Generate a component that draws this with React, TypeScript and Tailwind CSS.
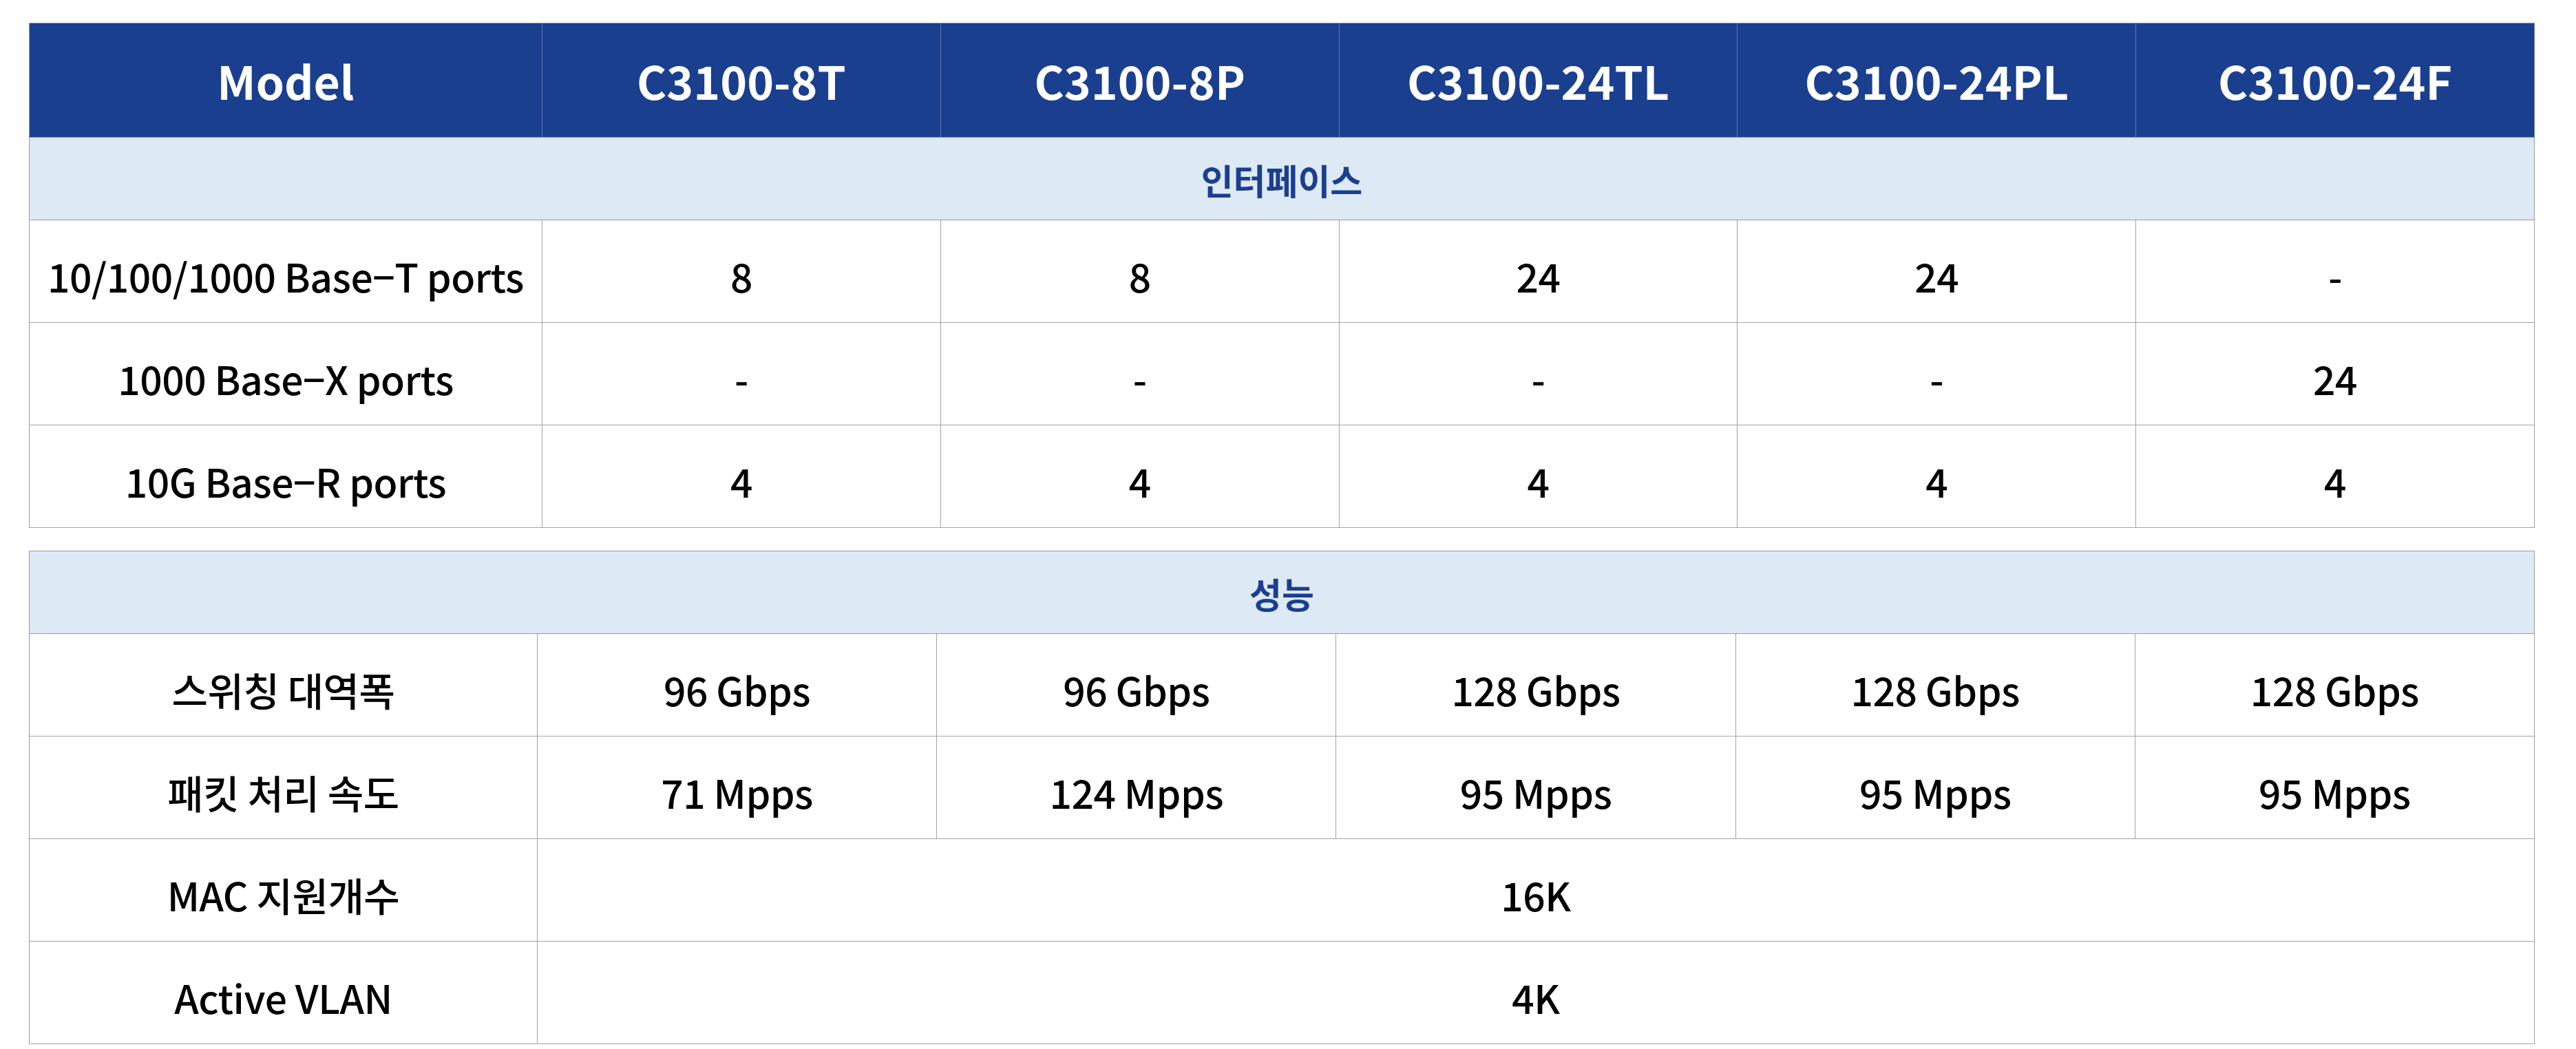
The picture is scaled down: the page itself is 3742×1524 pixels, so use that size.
import React from 'react'

const MODELS = ['C3100-8T', 'C3100-8P', 'C3100-24TL', 'C3100-24PL', 'C3100-24F']

const INTERFACE_ROWS: { label: string; values: string[] }[] = [
  { label: '10/100/1000 Base−T ports', values: ['8', '8', '24', '24', '-'] },
  { label: '1000 Base−X ports', values: ['-', '-', '-', '-', '24'] },
  { label: '10G Base−R ports', values: ['4', '4', '4', '4', '4'] },
]

const PERF_ROWS: { label: string; values: string[] }[] = [
  { label: '스위칭 대역폭', values: ['96 Gbps', '96 Gbps', '128 Gbps', '128 Gbps', '128 Gbps'] },
  { label: '패킷 처리 속도', values: ['71 Mpps', '124 Mpps', '95 Mpps', '95 Mpps', '95 Mpps'] },
]

const SPAN_ROWS = [
  { label: 'MAC 지원개수', value: '16K' },
  { label: 'Active VLAN', value: '4K' },
]

const font = { fontFamily: '"Noto Sans CJK KR", "Noto Sans", sans-serif' }

function Cell({ children, className = '' }: { children: React.ReactNode; className?: string }) {
  return (
    <div
      className={`flex items-center justify-center h-[149px] border-r border-b border-[#a3a3a3] text-[57px] font-medium tracking-[-0.5px] text-black pt-[14px] ${className}`}
    >
      {children}
    </div>
  )
}

function SectionRow({ title }: { title: string }) {
  return (
    <div className="col-span-6 flex items-center justify-center h-[120px] bg-[#dde9f5] border-r border-b border-[#9a9a9a] text-[51px] font-bold text-[#1b3f8f] pt-[4px]">
      {title}
    </div>
  )
}

export default function App() {
  return (
    <div className="bg-white w-[3742px] h-[1524px] pl-[42px] pt-[33px]" style={font}>
      {/* 인터페이스 */}
      <div className="w-[3640px] grid grid-cols-[745px_repeat(5,1fr)] border-t border-l border-[#9a9a9a]">
        {['Model', ...MODELS].map((m) => (
          <div
            key={m}
            className="flex items-center justify-center h-[166px] bg-[#1b3f8f] border-r border-b border-r-[#5f76a8] border-b-[#8a94aa] text-[66px] font-bold text-white"
          >
            {m}
          </div>
        ))}
        <SectionRow title="인터페이스" />
        {INTERFACE_ROWS.map((row) => (
          <React.Fragment key={row.label}>
            <Cell>{row.label}</Cell>
            {row.values.map((v, i) => (
              <Cell key={i}>{v}</Cell>
            ))}
          </React.Fragment>
        ))}
      </div>

      {/* 성능 */}
      <div className="mt-[33px] w-[3640px] grid grid-cols-[738px_repeat(5,1fr)] border-t border-l border-[#9a9a9a]">
        <SectionRow title="성능" />
        {PERF_ROWS.map((row) => (
          <React.Fragment key={row.label}>
            <Cell>{row.label}</Cell>
            {row.values.map((v, i) => (
              <Cell key={i}>{v}</Cell>
            ))}
          </React.Fragment>
        ))}
        {SPAN_ROWS.map((row) => (
          <React.Fragment key={row.label}>
            <Cell>{row.label}</Cell>
            <Cell className="col-span-5">{row.value}</Cell>
          </React.Fragment>
        ))}
      </div>
    </div>
  )
}
